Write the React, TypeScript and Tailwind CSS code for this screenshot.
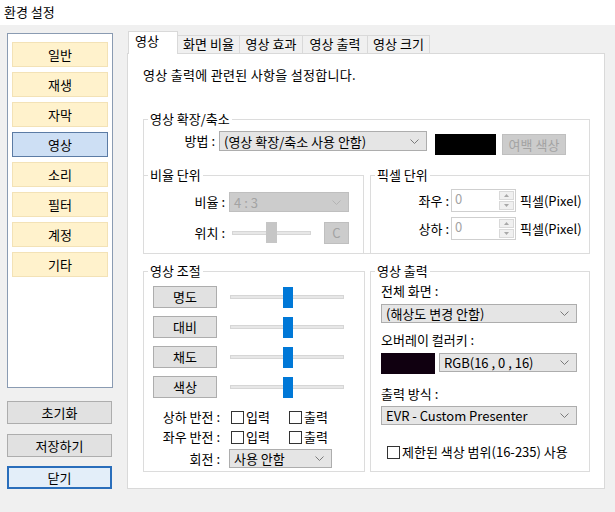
import type { ReactNode } from "react";

const MENU = ["일반", "재생", "자막", "영상", "소리", "필터", "계정", "기타"];
const TABS = [
  { label: "영상", w: "w-[50px]" },
  { label: "화면 비율", w: "w-[62px]" },
  { label: "영상 효과", w: "w-[63px]" },
  { label: "영상 출력", w: "w-[65px]" },
  { label: "영상 크기", w: "w-[62px]" },
];

function Chevron({ light }: { light?: boolean }) {
  return (
    <svg width="9" height="5" viewBox="0 0 9 5" className="shrink-0">
      <polyline
        points="0.5,0.5 4.5,4.5 8.5,0.5"
        fill="none"
        stroke={light ? "#b4b4b4" : "#7a7a7a"}
        strokeWidth="1"
      />
    </svg>
  );
}

function Select({ value, className = "", disabled }: { value: string; className?: string; disabled?: boolean }) {
  return (
    <div
      className={`flex items-center justify-between border pl-[4px] pr-[7px] leading-[17px] ${
        disabled ? "bg-[#cccccc] border-[#bfbfbf] text-[#a3a3a3]" : "bg-[#e5e5e5] border-[#adadad] text-black"
      } ${className}`}
    >
      <span className="whitespace-nowrap">{value}</span>
      <Chevron light={disabled} />
    </div>
  );
}

function Group({ label, className = "", children }: { label: string; className?: string; children?: ReactNode }) {
  return (
    <fieldset className={`border border-[#dcdcdc] p-0 min-w-0 ${className}`}>
      <legend className="ml-[4px] px-[2px] leading-[16px]">{label}</legend>
      {children}
    </fieldset>
  );
}

function Spin() {
  return (
    <div className="flex h-[23px] w-[65px] border border-[#cfcfcf] bg-white">
      <span className="flex-1 pl-[3px] leading-[18px] text-[#a3a3a3]">0</span>
      <div className="flex w-[17px] flex-col gap-px p-px">
        <div className="flex flex-1 items-center justify-center border border-[#d9d9d9] bg-[#f0f0f0]">
          <svg width="5" height="3" viewBox="0 0 5 3">
            <polygon points="0,3 2.5,0 5,3" fill="#a8a8a8" />
          </svg>
        </div>
        <div className="flex flex-1 items-center justify-center border border-[#d9d9d9] bg-[#f0f0f0]">
          <svg width="5" height="3" viewBox="0 0 5 3">
            <polygon points="0,0 2.5,3 5,0" fill="#a8a8a8" />
          </svg>
        </div>
      </div>
    </div>
  );
}

function Slider() {
  return (
    <div className="relative ml-[13px] flex h-[21px] w-[114px] items-center">
      <div className="h-[4px] w-full border border-[#d6d6d6] bg-[#e7e7e7]" />
      <div className="absolute left-[53px] top-0 h-[21px] w-[10px] bg-[#0078d7]" />
    </div>
  );
}

function Check({ label }: { label: string }) {
  return (
    <div className="flex items-center">
      <span className="h-[13px] w-[13px] shrink-0 border border-[#333333] bg-white" />
      <span className="ml-[2px] whitespace-nowrap">{label}</span>
    </div>
  );
}

export default function App() {
  return (
    <div className="h-[512px] w-[615px] overflow-hidden bg-[#f0f0f0] font-['Noto_Sans_CJK_KR','Noto_Sans',sans-serif] text-[13px] text-black">
      <div className="h-[25px] bg-white pl-[4px] pt-[3px] leading-[18px]">환경 설정</div>

      <div className="flex pt-[6px]">
        {/* left menu */}
        <div className="ml-[7px] mt-[2px] flex w-[106px] flex-col">
          <div className="flex h-[355px] flex-col gap-[5px] border border-[#8a9bb2] bg-white px-[4px] pt-[8px]">
            {MENU.map((m) => (
              <div
                key={m}
                className={`flex h-[25px] items-center justify-center border ${
                  m === "영상" ? "border-[#5b7ba4] bg-[#cddff4]" : "border-[#f3e2b6] bg-[#fff2cc]"
                }`}
              >
                {m}
              </div>
            ))}
          </div>
          <button className="mt-[13px] h-[23px] w-[105px] border border-[#adadad] bg-[#e1e1e1]">초기화</button>
          <button className="mt-[10px] h-[23px] w-[105px] border border-[#adadad] bg-[#e1e1e1]">저장하기</button>
          <button className="mt-[9px] h-[23px] w-[105px] border-2 border-[#2a6ebb] bg-[#e3eef9]">닫기</button>
        </div>

        {/* right tab control */}
        <div className="ml-[14px] flex w-[478px] flex-col">
          <div className="relative z-10 ml-px flex h-[23px] items-end">
            {TABS.map((t, i) =>
              i === 0 ? (
                <div key={t.label} className={`${t.w} h-[23px] border-x border-t border-[#d9d9d9] bg-white pl-[6px] pt-[1px] leading-[16px]`}>
                  {t.label}
                </div>
              ) : (
                <div
                  key={t.label}
                  className={`${t.w} mb-px h-[18px] border-r border-t border-[#d9d9d9] bg-[#f0f0f0] text-center leading-[16px]`}
                >
                  {t.label}
                </div>
              )
            )}
          </div>

          <div className="-mt-px flex h-[436px] flex-col border border-[#d9d9d9] bg-white pl-[15px] pr-[14px]">
            <div className="mt-[12px] leading-[18px] tracking-[0.3px]">영상 출력에 관련된 사항을 설정합니다.</div>

            <Group label="영상 확장/축소" className="mt-[27px]">
              <div className="mt-[4px] flex h-[24px] items-start">
                <div className="w-[75px] pr-[4px] text-right leading-[20px]">방법 :</div>
                <Select value="(영상 확장/축소 사용 안함)" className="h-[20px] w-[208px]" />
                <div className="ml-[8px] mt-[3px] h-[21px] w-[61px] bg-black" />
                <div className="ml-[6px] mt-[3px] flex h-[21px] w-[64px] items-center justify-center border border-[#bfbfbf] bg-[#cccccc] text-[#a3a3a3]">
                  여백 색상
                </div>
              </div>

              <div className="-mx-px -mb-px mt-[12px] flex gap-[6px]">
                <Group label="비율 단위" className="h-[87px] w-[221px]">
                  <div className="mt-[9px] flex h-[20px] items-center">
                    <div className="w-[85px] pr-[4px] text-right">비율 :</div>
                    <Select value="4 : 3" disabled className="h-[20px] w-[120px]" />
                  </div>
                  <div className="mt-[9px] flex h-[23px] items-center">
                    <div className="w-[85px] pr-[4px] text-right">위치 :</div>
                    <div className="relative ml-[3px] flex h-[21px] w-[79px] items-center">
                      <div className="h-[4px] w-full border border-[#d6d6d6] bg-[#e7e7e7]" />
                      <div className="absolute left-[34px] top-0 h-[21px] w-[11px] bg-[#c6c6c6]" />
                    </div>
                    <div className="ml-[13px] flex h-[22px] w-[25px] items-center justify-center border border-[#bfbfbf] bg-[#cccccc] text-[#a3a3a3]">
                      C
                    </div>
                  </div>
                </Group>

                <Group label="픽셀 단위" className="h-[87px] flex-1">
                  <div className="mt-[6px] flex items-center">
                    <div className="w-[80px] pr-[2px] text-right">좌우 :</div>
                    <Spin />
                    <span className="ml-[4px]">픽셀(Pixel)</span>
                  </div>
                  <div className="mt-[5px] flex items-center">
                    <div className="w-[80px] pr-[2px] text-right">상하 :</div>
                    <Spin />
                    <span className="ml-[4px]">픽셀(Pixel)</span>
                  </div>
                </Group>
              </div>
            </Group>

            <div className="mt-[9px] flex gap-[5px]">
              <Group label="영상 조절" className="h-[209px] w-[222px]">
                <div className="mt-[7px] flex flex-col gap-[8px] pl-[9px]">
                  {["명도", "대비", "채도", "색상"].map((b) => (
                    <div key={b} className="flex items-center">
                      <button className="h-[22px] w-[64px] border border-[#adadad] bg-[#e1e1e1]">{b}</button>
                      <Slider />
                    </div>
                  ))}
                </div>
                <div className="mt-[9px] flex h-[20px] items-center">
                  <div className="w-[87px] pr-[11px] text-right">상하 반전 :</div>
                  <div className="w-[58px]">
                    <Check label="입력" />
                  </div>
                  <Check label="출력" />
                </div>
                <div className="flex h-[20px] items-center">
                  <div className="w-[87px] pr-[11px] text-right">좌우 반전 :</div>
                  <div className="w-[58px]">
                    <Check label="입력" />
                  </div>
                  <Check label="출력" />
                </div>
                <div className="mt-[2px] flex items-center">
                  <div className="w-[85px] pr-[9px] text-right">회전 :</div>
                  <Select value="사용 안함" className="h-[19px] w-[103px]" />
                </div>
              </Group>

              <Group label="영상 출력" className="h-[209px] flex-1">
                <div className="flex flex-col pl-[10px]">
                  <div className="mt-[3px] leading-[18px]">전체 화면 :</div>
                  <Select value="(해상도 변경 안함)" className="mt-[4px] h-[19px] w-[196px]" />
                  <div className="mt-[8px] leading-[18px]">오버레이 컬러키 :</div>
                  <div className="mt-[4px] flex items-start">
                    <div className="h-[21px] w-[54px] bg-[#100010]" />
                    <Select value="RGB(16 , 0 , 16)" className="ml-[4px] h-[19px] w-[138px]" />
                  </div>
                  <div className="mt-[11px] leading-[18px]">출력 방식 :</div>
                  <Select value="EVR - Custom Presenter" className="mt-[3px] h-[19px] w-[196px]" />
                  <div className="ml-[6px] mt-[17px] flex h-[20px] items-center">
                    <Check label="제한된 색상 범위(16-235) 사용" />
                  </div>
                </div>
              </Group>
            </div>
          </div>
        </div>
      </div>
    </div>
  );
}
